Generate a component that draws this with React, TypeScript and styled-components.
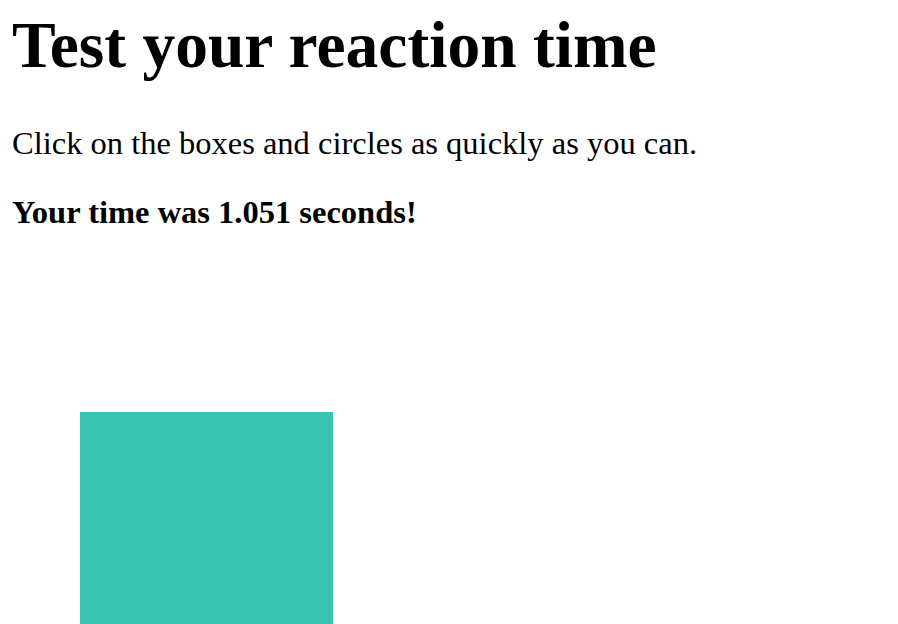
import styled, { createGlobalStyle } from "styled-components";

const GlobalStyle = createGlobalStyle`
  html {
    overflow: hidden;
  }
  body {
    margin: 8px 8px 8px 12px;
    font-family: "Liberation Serif", "Times New Roman", serif;
    font-size: 32.5px;
    color: #000;
    background: #fff;
  }
`;

const Title = styled.h1`
  margin: 0 0 42px;
  font-size: 65.5px;
  font-weight: 700;
`;

const Intro = styled.p`
  margin: 32px 0;
`;

const Result = styled.p`
  margin: 32px 0;
  font-weight: 700;
`;

const Board = styled.div`
  position: relative;
  height: 400px;
`;

const Shape = styled.div<{ $round?: boolean }>`
  position: absolute;
  width: 253px;
  height: 253px;
  background: #38c4b0;
  border-radius: ${(p) => (p.$round ? "50%" : "0")};
  cursor: pointer;
`;

export default function App() {
  const shape = { top: 149, left: 68, round: false };
  return (
    <>
      <GlobalStyle />
      <Title>Test your reaction time</Title>
      <Intro>Click on the boxes and circles as quickly as you can.</Intro>
      <Result>Your time was 1.051 seconds!</Result>
      <Board>
        <Shape
          $round={shape.round}
          style={{ top: shape.top, left: shape.left }}
        />
      </Board>
    </>
  );
}
